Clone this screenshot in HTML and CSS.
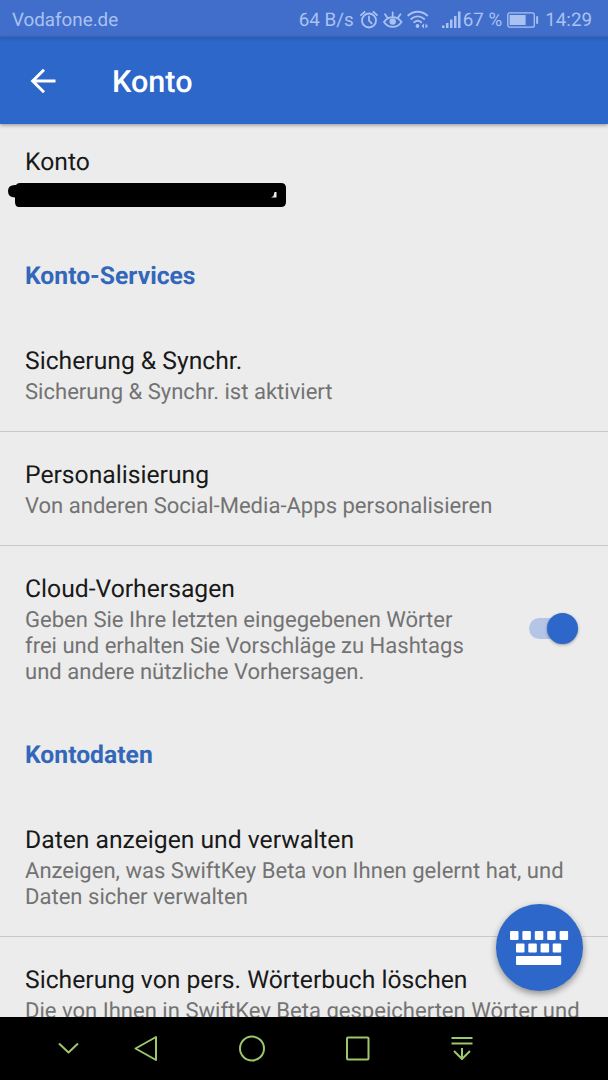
FILE: index.html
```html
<!DOCTYPE html>
<html lang="de">
<head>
  <meta charset="UTF-8">
  <title>Konto</title>
  <link rel="stylesheet" href="styles.css">
</head>
<body>
  <div class="phone">
    <div class="status-bar">
      <span class="carrier">Vodafone.de</span>
      <span class="speed">64 B/s</span>
      <svg class="status-icons" width="70" height="24" viewBox="0 0 70 24" fill="none" stroke="currentColor" stroke-width="1.8" stroke-linecap="round">
        <!-- alarm -->
        <circle cx="10" cy="12.500" r="7"/>
        <path d="M10 8.500v4.200l2.600 2.600M2 7.200l3.600-3.400M18 7.200l-3.600-3.400"/>
        <!-- eye -->
        <path d="M25 14c4.500-6.600 13-6.600 17.500 0c-4.500 6.600-13 6.600-17.500 0zM33.700 8.500v-4M28.200 9.500l-2.200-3.200M39.200 9.500l2.200-3.200"/>
        <circle cx="33.700" cy="13.500" r="3.200" fill="currentColor" stroke="none"/>
        <!-- wifi -->
        <path d="M49.200 7.500c5.400-5 13.600-5 19 0M52.200 11c3.800-3.400 9.200-3.400 13 0M55.200 14.300c2.200-1.900 4.800-1.900 7 0"/>
        <circle cx="58.500" cy="18" r="1.900" fill="currentColor" stroke="none"/>
        <path d="M65 15.500l-2.500 2.500l2.500 2.500zM66.500 15.500l2.500 2.500l-2.500 2.500z" fill="currentColor" stroke="none"/>
      </svg>
      <svg class="signal" width="20" height="20" viewBox="0 0 20 20" fill="currentColor">
        <path d="M0 15.500h2.500V18H0zM4 13h2.500v5H4zM8 9.500h2.500V18H8zM12 6h2.500v12H12zM16 1.500h2.500V18H16z"/>
      </svg>
      <span class="percent">67 %</span>
      <svg class="battery" width="32" height="16" viewBox="0 0 32 16" fill="none" stroke="currentColor" stroke-width="1.3">
        <rect x=".8" y=".8" width="26.500" height="14.400" rx="2"/>
        <path d="M2.600 2.900h16v10.200h-16zM29.200 4.200h1.900v7.600h-1.900z" fill="currentColor" stroke="none"/>
      </svg>
      <span class="clock">14:29</span>
    </div>

    <div class="app-bar">
      <svg class="back" width="26" height="26" viewBox="0 0 26 26" fill="none" stroke="#fff" stroke-width="3">
        <path d="M25.500 13H3M14 1.700L2.700 13L14 24.300"/>
      </svg>
      <h1>Konto</h1>
    </div>

    <div class="list">
      <div class="row account">
        <div class="title">Konto</div>
        <svg class="redacted" width="278" height="24" viewBox="0 0 278 24">
          <path d="M12 0h261q5 0 5 5v14q0 5-5 5H11q-4 0-4-5v-4.500q-7 0-7-6.500t8-6q1-2 4-2z"/>
          <path d="M268.500 9v5.500h-5.500l2.500-1.500l1-4z" fill="#eee"/>
        </svg>
      </div>

      <h2>Konto-Services</h2>

      <div class="row line">
        <div class="title">Sicherung &amp; Synchr.</div>
        <div class="summary">Sicherung &amp; Synchr. ist aktiviert</div>
      </div>
      <div class="row line">
        <div class="title">Personalisierung</div>
        <div class="summary">Von anderen Social-Media-Apps personalisieren</div>
      </div>
      <div class="row with-switch">
        <div>
          <div class="title">Cloud-Vorhersagen</div>
          <div class="summary">Geben Sie Ihre letzten eingegebenen Wörter<br>frei und erhalten Sie Vorschläge zu Hashtags<br>und andere nützliche Vorhersagen.</div>
        </div>
        <div class="switch"><div class="thumb"></div></div>
      </div>

      <h2>Kontodaten</h2>

      <div class="row line">
        <div class="title">Daten anzeigen und verwalten</div>
        <div class="summary">Anzeigen, was SwiftKey Beta von Ihnen gelernt hat, und<br>Daten sicher verwalten</div>
      </div>
      <div class="row">
        <div class="title">Sicherung von pers. Wörterbuch löschen</div>
        <div class="summary">Die von Ihnen in SwiftKey Beta gespeicherten Wörter und</div>
      </div>

      <div class="fab">
        <svg width="60" height="36" viewBox="0 0 60 36" fill="#fff">
          <rect x="0" y="1" width="8.500" height="9" rx="1"/>
          <rect x="12.400" y="1" width="8.500" height="9" rx="1"/>
          <rect x="24.800" y="1" width="8.500" height="9" rx="1"/>
          <rect x="37.200" y="1" width="8.500" height="9" rx="1"/>
          <rect x="49.600" y="1" width="8.500" height="9" rx="1"/>
          <rect x="6" y="13.500" width="8.500" height="9" rx="1"/>
          <rect x="18.300" y="13.500" width="8.500" height="9" rx="1"/>
          <rect x="30.600" y="13.500" width="8.500" height="9" rx="1"/>
          <rect x="42.700" y="13.500" width="8.500" height="9" rx="1"/>
          <rect x="6" y="26" width="45.200" height="9" rx="1"/>
        </svg>
      </div>
    </div>

    <div class="nav-bar">
      <svg class="hide" width="24" height="28" viewBox="0 0 24 28"><path d="M3 9.500l9.500 9l9.500-9"/></svg>
      <svg width="24" height="28" viewBox="0 0 24 28"><path d="M22 3v23L1.500 14.500z"/></svg>
      <svg width="28" height="28" viewBox="0 0 28 28"><circle cx="14" cy="14.500" r="12"/></svg>
      <svg width="24" height="28" viewBox="0 0 24 28"><rect x="1" y="3.500" width="21.500" height="22" rx="1"/></svg>
      <svg width="24" height="28" viewBox="0 0 24 28"><path d="M1.500 4h21M1.500 9.500h21M12 14v11M4 17l8 8l8-8"/></svg>
    </div>
  </div>
</body>
</html>
```
FILE: styles.css
```css
body {
  margin: 0;
  background-color: #ececec;
  font-family: Roboto, sans-serif;
  text-rendering: geometricPrecision;
}

.phone {
  width: 608px;
  height: 1080px;
  display: flex;
  flex-direction: column;
  overflow: hidden;
}

.status-bar {
  display: flex;
  align-items: center;
  height: 37px;
  flex-shrink: 0;
  padding: 2px 16px 0 12px;
  box-sizing: border-box;
  background-color: #426ecb;
  color: #a9c2f0;
  font-size: 18.8px;
  white-space: nowrap;
}

.carrier {
  flex: 1;
}

.status-icons {
  margin-left: 5px;
}

.signal {
  margin-left: 13px;
}

.percent {
  margin-left: 1px;
}

.battery {
  margin: 0 6px 0 5px;
}

.app-bar {
  display: flex;
  align-items: center;
  height: 87px;
  flex-shrink: 0;
  padding-left: 30px;
  box-sizing: border-box;
  background: linear-gradient(#2b5cb6, #2c67c9 5px);
  box-shadow: 0 1px 4px rgba(0,0,0,0.4);
  position: relative;
  z-index: 1;
}

h1 {
  margin: 4px 0 0 56px;
  color: white;
  font-size: 30.6px;
  font-weight: 500;
}

.list {
  height: 893px;
  overflow: hidden;
  position: relative;
}

.row {
  padding: 29px 25px 25px;
}

.account {
  padding-top: 24px;
}

.line {
  border-bottom: 1px solid #c9c9c9;
}

.title {
  margin-bottom: 4px;
  color: #191919;
  font-size: 24.7px;
  line-height: 29px;
}

.summary {
  color: #737373;
  font-size: 22.05px;
  line-height: 26px;
  white-space: nowrap;
}

.redacted {
  display: block;
  margin: 6px 0 0 -17px;
}

h2 {
  margin: 0;
  padding: 30px 25px 27px;
  color: #3367b9;
  font-size: 24.7px;
  font-weight: 700;
  line-height: 29px;
}

.with-switch {
  display: flex;
  justify-content: space-between;
  align-items: center;
}

.switch {
  display: flex;
  justify-content: flex-end;
  align-items: center;
  width: 49px;
  height: 21px;
  margin: 0 5px 4px 0;
  border-radius: 11px;
  background-color: #b4c5e6;
}

.thumb {
  width: 31px;
  height: 31px;
  flex-shrink: 0;
  border-radius: 50%;
  background-color: #2c67c9;
  box-shadow: 0 1px 3px rgba(0,0,0,0.35);
}

.fab {
  position: absolute;
  right: 25px;
  bottom: 26px;
  width: 87px;
  height: 87px;
  display: flex;
  justify-content: center;
  align-items: center;
  border-radius: 50%;
  background-color: #2c67c9;
  box-shadow: 0 3px 7px rgba(0,0,0,0.4);
}

.nav-bar {
  display: flex;
  align-items: center;
  gap: 80px;
  height: 63px;
  flex-shrink: 0;
  padding: 0 0 2px 56px;
  box-sizing: border-box;
  background-color: black;
}

.nav-bar svg {
  fill: none;
  stroke: #9cc76b;
  stroke-width: 2;
  stroke-linejoin: round;
}

.nav-bar .hide {
  margin-right: -26px;
}
```
